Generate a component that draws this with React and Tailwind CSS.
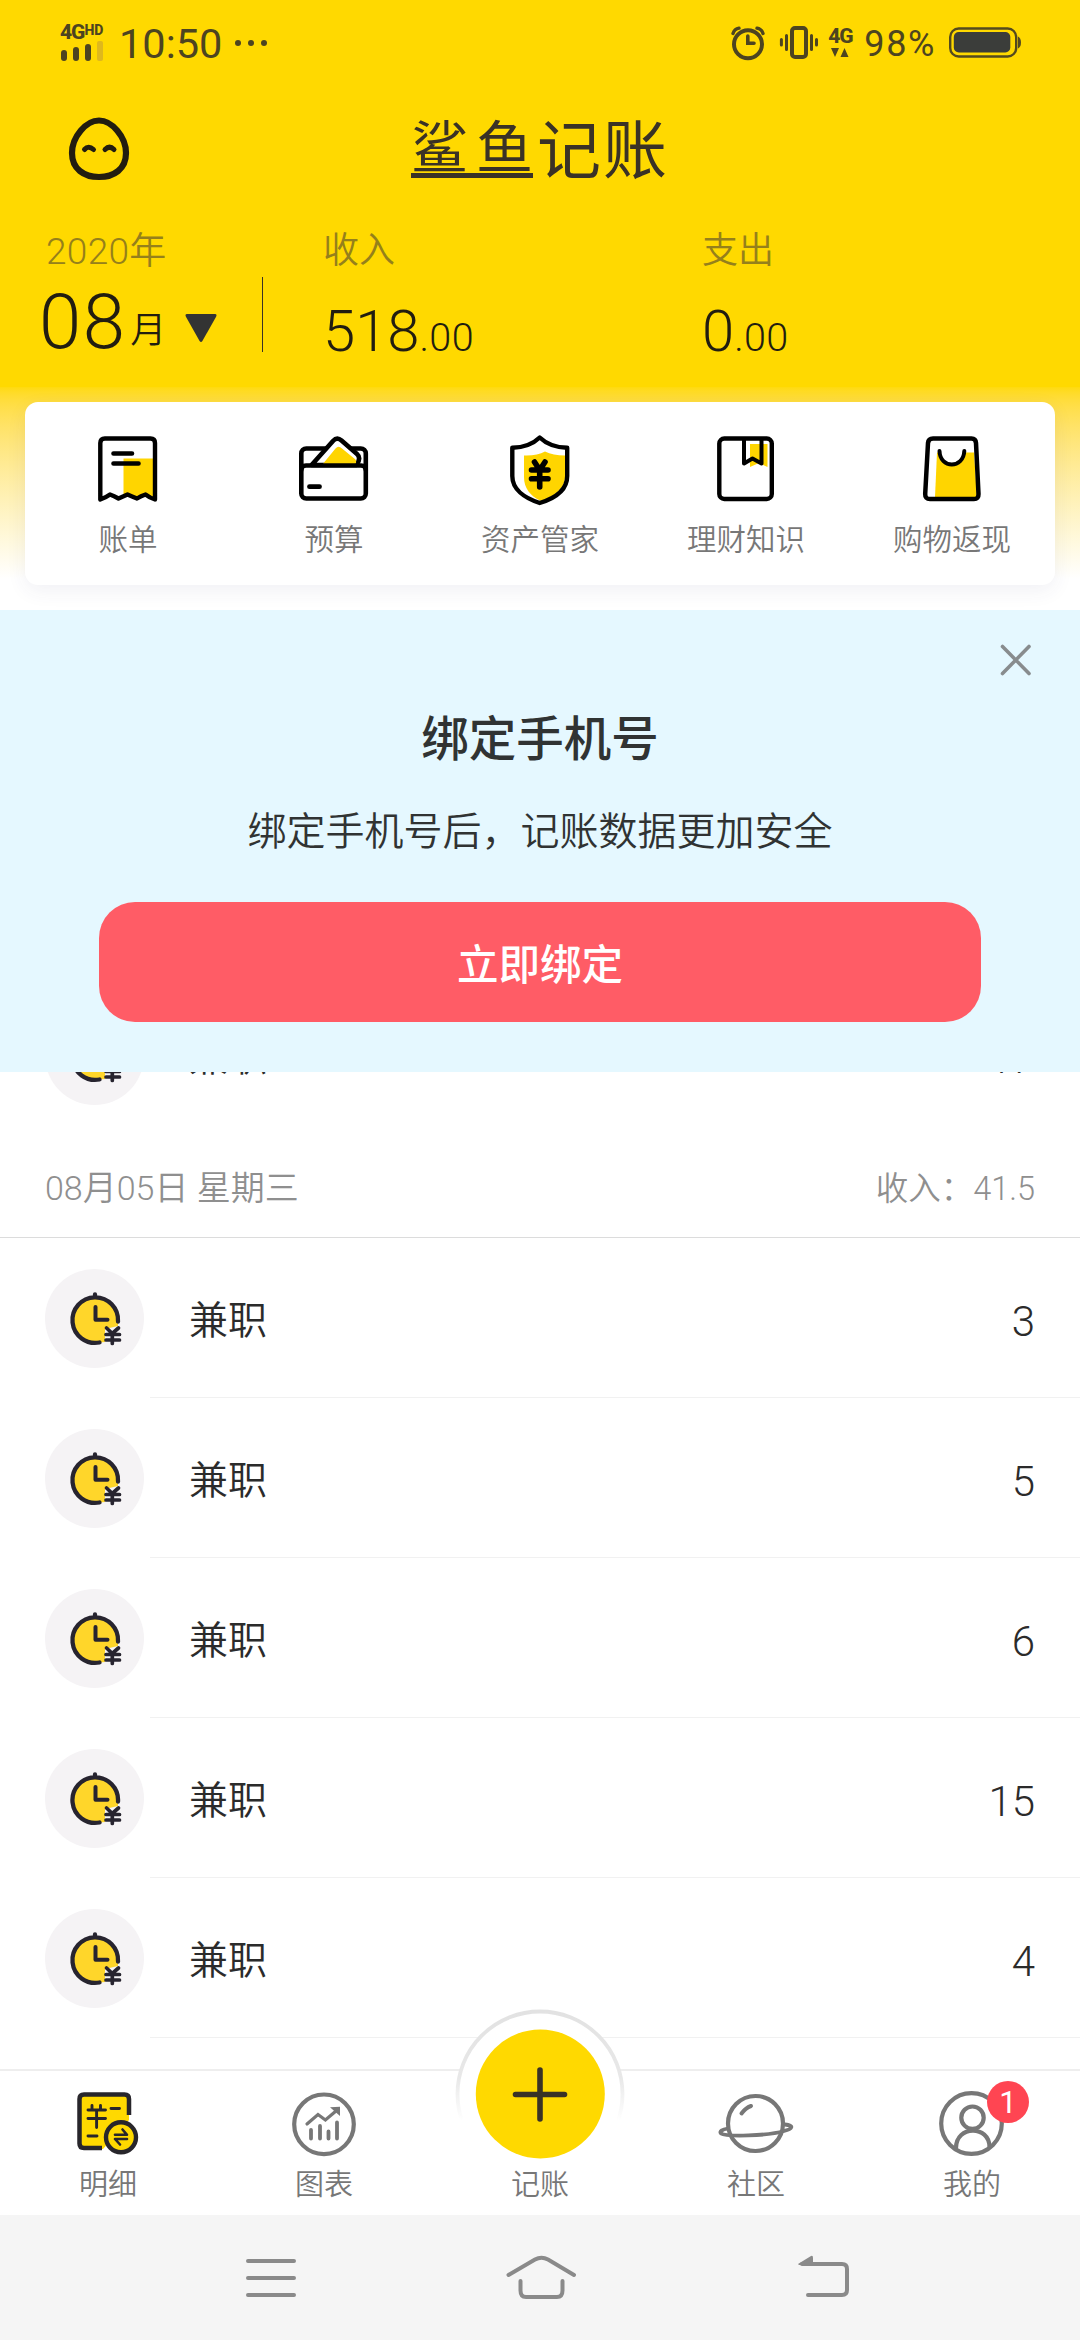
import React from "react";

const latin = "font-[Roboto,'Noto_Sans_CJK_SC',sans-serif]";

function EggIcon() {
  return (
    <svg width="62" height="64" viewBox="0 0 62 64" fill="none" stroke="#221d10" strokeLinecap="round">
      <path d="M31 3.5C44 3.5 58 20 58 36C58 52 46 60 31 60C16 60 4 52 4 36C4 20 18 3.5 31 3.5Z" strokeWidth="6.2" />
      <path d="M16.5 32.5Q20.5 28 25.5 32.5M37 32.5Q41.5 28 46 32.5" strokeWidth="5" />
    </svg>
  );
}

function SignalIcon() {
  return (
    <svg width="44" height="21" viewBox="0 0 44 21" fill="#4d4420">
      <rect x="1" y="10" width="6" height="11" rx="3" />
      <rect x="13" y="7" width="6" height="14" rx="3" />
      <rect x="25" y="4" width="6" height="17" rx="3" />
      <rect x="37" y="1" width="6" height="20" rx="2" fill="#dfb81c" />
    </svg>
  );
}

function AlarmIcon() {
  return (
    <svg width="34" height="35" viewBox="0 0 34 35" fill="none" stroke="#4d4420" strokeLinecap="round">
      <circle cx="17" cy="18.3" r="14" strokeWidth="4" />
      <path d="M16.8 10V17.3H23" strokeWidth="3.6" />
      <path d="M2 7.5Q3.5 3 8 2.2M32 7.5Q30.5 3 26 2.2" strokeWidth="3.4" />
    </svg>
  );
}

function VibrateIcon() {
  return (
    <svg width="40" height="36" viewBox="0 0 40 36" fill="none" stroke="#4d4420" strokeLinecap="round">
      <rect x="13" y="3" width="14" height="29" rx="3" strokeWidth="4" />
      <path d="M2.4 14.5V20M7.5 10.5V24.5M32.5 10.5V24.5M37.5 14.5V20" strokeWidth="3" />
    </svg>
  );
}

function BatteryIcon() {
  return (
    <svg width="72" height="32" viewBox="0 0 72 32" fill="none">
      <rect x="1.2" y="1.5" width="66" height="28" rx="8.5" stroke="#544a1e" strokeWidth="2.4" />
      <rect x="4.8" y="5" width="56.5" height="20.5" rx="5" fill="#3b3d3a" />
      <path d="M69 9.5Q72 11 72 15.5Q72 20 69 21.5Z" fill="#544a1e" />
    </svg>
  );
}

function BillIcon() {
  return (
    <svg width="60" height="68" viewBox="0 0 60 68" fill="none" stroke="#000" strokeLinecap="round" strokeLinejoin="round">
      <path d="M25.5 22.5H55V61L47 58L39 62L29.5 58L25.5 60Z" fill="#ffd500" stroke="none" />
      <path d="M2.3 63.5V7Q2.3 2.5 6.8 2.5H52.5Q57 2.5 57 7V63.5Q52 62 47.5 58.5Q43 60 39 62.5Q34 60.5 29.5 58.5Q25 60.5 20.5 62.5Q16 60 12 58.5Q8 61.5 2.3 63.5Z" strokeWidth="4.4" />
      <path d="M15.5 17.5H34M15.5 27.5H40.5" strokeWidth="4.6" />
    </svg>
  );
}

function WalletIcon() {
  return (
    <svg width="70" height="68" viewBox="0 0 70 68" fill="none" stroke="#000" strokeLinecap="round" strokeLinejoin="round">
      <rect x="2.3" y="12.5" width="64.5" height="50" rx="5" strokeWidth="4.6" />
      <path d="M12.6 29L34 5Q38 .5 42.5 4.5L58 18Q62.5 22 57.5 29Z" fill="#fff" strokeWidth="4.6" />
      <path d="M23 29L36.5 12.5Q39.5 9 43 12.5L56.5 23.5Q58 26 56 29Z" fill="#ffd500" stroke="none" />
      <path d="M2.3 34Q2.3 29.5 7 29.5H62Q66.8 29.5 66.8 34" strokeWidth="4.6" />
      <path d="M10.5 50.7H20.5" strokeWidth="4.8" />
    </svg>
  );
}

function ShieldIcon() {
  return (
    <svg width="60" height="72" viewBox="0 0 60 72" fill="none" stroke="#000" strokeLinecap="round" strokeLinejoin="round">
      <path d="M14 21.5Q27 22 35 17.5Q43 21.5 55 21.5V43C55 54 44 63 31 67C20 62 14 54 14 43Z" fill="#ffd500" stroke="none" />
      <path d="M29.7 3.5C23 10 14 13.5 2.3 13.7V42C2.3 55 14 64 29.7 69C46 64 57.2 55 57.2 42V13.7C46 13.5 36.5 10 29.7 3.5Z" strokeWidth="4.4" />
      <path d="M24.5 28L29.7 36L35 28M21.5 36H38M21.5 44.7H38M29.7 36V53" strokeWidth="5.6" />
    </svg>
  );
}

function BookIcon() {
  return (
    <svg width="58" height="68" viewBox="0 0 58 68" fill="none" stroke="#000" strokeLinecap="round" strokeLinejoin="round">
      <path d="M33 8H50.5V31L42 27L33 31Z" fill="#ffd500" stroke="none" />
      <rect x="2.3" y="2.5" width="52.5" height="60.5" rx="5" strokeWidth="4.4" />
      <path d="M27 3V27.5L35.5 22.5L44.5 27.5V3" strokeWidth="4" />
    </svg>
  );
}

function BagIcon() {
  return (
    <svg width="60" height="68" viewBox="0 0 60 68" fill="none" stroke="#000" strokeLinecap="round" strokeLinejoin="round">
      <path d="M15 16.5H52L55 61H13Z" fill="#ffd500" stroke="none" />
      <path d="M11 2.5H49.5Q53.7 2.5 54 7L56.5 58Q56.7 63 52 63H8Q3 63 3.2 58L6 7Q6.4 2.5 11 2.5Z" strokeWidth="4.5" />
      <path d="M17.5 15C18 33 41.5 33 42.3 15" fill="#fff" strokeWidth="4" />
    </svg>
  );
}

function JobIcon() {
  return (
    <svg className="block h-[99px] w-[99px] shrink-0" viewBox="0 0 99 99" fill="none" stroke="#27242f" strokeLinecap="round">
      <circle cx="49.5" cy="49.5" r="49.5" fill="#f5f3f5" stroke="none" />
      <path d="M50 28A23 23 0 0 1 73 52L73 57L60 60V73L50 74A23 23 0 0 1 50 28Z" fill="#ffd62a" stroke="none" />
      <path d="M54.5 73.5A22.8 22.8 0 1 1 73 52.5M50 28V25.5" strokeWidth="4.3" />
      <path d="M50.5 38V50.7H62.5" strokeWidth="4" strokeLinejoin="round" />
      <path d="M61.5 59L67.3 64.5L73.5 59M61 65.5H74.5M61 71H74.5M67.3 65V74.5" strokeWidth="3.7" />
    </svg>
  );
}

function DetailIcon() {
  return (
    <svg width="62" height="64" viewBox="0 0 62 64" fill="none" stroke="#28262b" strokeLinecap="round">
      <path d="M6 2.5H48Q52 2.5 52 6.5V28L26 57H6Q2.5 57 2.5 53V6.5Q2.5 2.5 6 2.5Z" fill="#ffd900" stroke="none" />
      <path d="M52 23V7Q52 2.5 47.5 2.5H7Q2.5 2.5 2.5 7V51.5Q2.5 56 7 56H25" strokeWidth="4.5" strokeLinecap="butt" />
      <path d="M11 18H28.5M11 26.5H28.5M19.6 18V35.5M15 13.5V18M23.5 13.5V18M34 16.5H42.5M11 44H20" strokeWidth="2.9" />
      <circle cx="44" cy="45.3" r="15" fill="#ffd900" strokeWidth="4.4" />
      <path d="M38 42.8H50L45.5 37.5M50 47H38L43 52.5" strokeWidth="2.6" strokeLinejoin="round" />
    </svg>
  );
}

function ChartIcon() {
  return (
    <svg width="64" height="65" viewBox="0 0 64 65" fill="none" stroke="#777" strokeLinecap="round">
      <circle cx="32" cy="32.3" r="29.8" strokeWidth="4.2" />
      <path d="M15 32L26 22.5L33.4 28L44 19" strokeWidth="3.2" />
      <path d="M38 15.3L48 14.7V24Z" fill="#777" stroke="none" />
      <path d="M19 38V46.5M28 34V46.5M36.5 39.5V46.5M45 30.5V46.5" strokeWidth="3.8" />
    </svg>
  );
}

function PlanetIcon() {
  return (
    <svg width="76" height="62" viewBox="0 0 76 62" fill="none" stroke="#777" strokeLinecap="round">
      <circle cx="37.5" cy="30.5" r="27.5" strokeWidth="4.2" />
      <path d="M10 35.5C4 36.5 1 38.5 3 40.5C8 44 50 43 66 38C74 36 77 32.5 67 31.5" strokeWidth="3.8" />
      <path d="M23.5 20.5Q27.5 15 33 13" strokeWidth="4" />
    </svg>
  );
}

function UserIcon() {
  return (
    <svg width="66" height="66" viewBox="0 0 66 66" fill="none" stroke="#777" strokeLinecap="round">
      <circle cx="32.5" cy="32.5" r="30.3" strokeWidth="4.2" />
      <circle cx="33.5" cy="26.7" r="11.2" strokeWidth="4.2" />
      <path d="M17 57C17 34 50.5 34 50.5 56" strokeWidth="4.2" />
    </svg>
  );
}

const shortcuts = [
  { label: "账单", Icon: BillIcon },
  { label: "预算", Icon: WalletIcon },
  { label: "资产管家", Icon: ShieldIcon },
  { label: "理财知识", Icon: BookIcon },
  { label: "购物返现", Icon: BagIcon },
];

function StatusBar() {
  return (
    <div className="flex h-[86px] items-center pl-[60px] pr-[59px] text-[#4d4420]">
      <div className="flex h-[36px] w-[46px] flex-col justify-between">
        <div className="flex items-start leading-none">
          <span className="text-[21px] leading-[15px] font-extrabold tracking-[-1px]">4G</span>
          <span className="text-[14px] leading-[10px] font-extrabold">HD</span>
        </div>
        <SignalIcon />
      </div>
      <span className="ml-[13px] mt-[2px] text-[41.5px] leading-none">10:50</span>
      <div className="ml-[13px] flex gap-[7px]">
        <i className="size-[6px] rounded-full bg-[#4d4420]" />
        <i className="size-[6px] rounded-full bg-[#4d4420]" />
        <i className="size-[6px] rounded-full bg-[#4d4420]" />
      </div>
      <div className="ml-auto flex items-center">
        <AlarmIcon />
        <div className="ml-[14px]"><VibrateIcon /></div>
        <div className="ml-[8px] flex w-[26px] flex-col items-center gap-[4px]">
          <span className="text-[21px] leading-[16px] font-extrabold tracking-[-1px]">4G</span>
          <svg width="20" height="10" viewBox="0 0 20 10" fill="#4d4420"><path d="M1 0H9L5 9ZM10.5 9H18.5L14.5 0Z" /></svg>
        </div>
        <span className="ml-[11px] mr-[13px] mt-[2px] text-[36px] leading-none tracking-[1.6px]">98%</span>
        <BatteryIcon />
      </div>
    </div>
  );
}

function TitleBar() {
  return (
    <div className="grid h-[130px] grid-cols-[1fr_auto_1fr] items-start">
      <div className="pl-[68px] pt-[31px]"><EggIcon /></div>
      <h1 className="mt-[32px] flex h-[60px] w-[258px] items-start text-[#3a3226] font-['Noto_Sans_CJK_SC',sans-serif]">
        <span className="flex h-[60px] w-[126px] justify-between border-b-[5px] border-[#3a3226] text-[57px] leading-[50px]">
          <span>鲨</span>
          <span>鱼</span>
        </span>
        <span className="ml-[4px] text-[64px] leading-[55px] tracking-[2px] whitespace-nowrap">记账</span>
      </h1>
      <div />
    </div>
  );
}

function Amount({ label, whole, fraction }) {
  return (
    <div>
      <div className="h-[36px] text-[36px] leading-[38px] text-[#95801b]">{label}</div>
      <div className="mt-[33px] flex h-[60px] items-baseline leading-[60px] text-[#221d10]">
        <span className="text-[58px]">{whole}</span>
        <span className="text-[39.5px] tracking-[0.4px]">{fraction}</span>
      </div>
    </div>
  );
}

function Summary() {
  return (
    <div className="flex h-[171px] items-start pt-[16px] font-[350]">
      <div className="w-[262px] pl-[46px]">
        <div className="h-[36px] text-[37px] leading-[39px] tracking-[0.3px] text-[#95801b]">2020年</div>
        <div className="ml-[-7px] mt-[14px] flex h-[80px] items-baseline leading-[80px] text-[#221d10]">
          <span className="text-[76px] tracking-[1.5px]">08</span>
          <span className="ml-[4px] self-end text-[36px] leading-[62px]">月</span>
          <svg className="ml-[19px]" width="32" height="34" viewBox="0 0 31 33"><path d="M2 0H29Q31.5 0 30 3L17 26Q15.5 28.5 14 26L1 3Q-.5 0 2 0Z" fill="#333" /></svg>
        </div>
      </div>
      <div className="mt-[45px] h-[75px] w-px bg-[#3a3226]" />
      <div className="ml-[60px] w-[379px]"><Amount label="收入" whole="518" fraction=".00" /></div>
      <Amount label="支出" whole="0" fraction=".00" />
    </div>
  );
}

function Shortcuts() {
  return (
    <div className="h-[223px] bg-linear-to-b from-[#ffda0c] to-white to-[192px] px-[25px] pt-[15px]">
      <div className="grid h-[183px] grid-cols-5 rounded-[13px] bg-white shadow-[0_6px_20px_rgba(60,60,110,0.07)]">
        {shortcuts.map(({ label, Icon }) => (
          <div key={label} className="flex flex-col items-center">
            <div className="flex h-[120px] items-center pt-[16px]"><Icon /></div>
            <span className="text-[29.5px] leading-[37px] font-[350] text-[#777]">{label}</span>
          </div>
        ))}
      </div>
    </div>
  );
}

function BindBanner() {
  return (
    <section className="relative z-10 flex h-[462px] shrink-0 flex-col items-center bg-[#e5f8ff] text-[#303333]">
      <svg className="mr-[48px] mt-[34px] self-end" width="32" height="32" viewBox="0 0 32 32" stroke="#888c8e" strokeWidth="3.6" strokeLinecap="round">
        <path d="M2.5 2.5L29 29.5M29 2.5L2.5 29.5" />
      </svg>
      <h2 className="mt-[34px] text-[47.5px] leading-[60px] font-medium">绑定手机号</h2>
      <p className="mt-[37px] text-[39px] leading-[50px] font-[350]">绑定手机号后，记账数据更加安全</p>
      <button className="mt-[45px] h-[120px] w-[882px] rounded-[36px] bg-[#ff5c66] pt-[7px] text-[41.5px] leading-[50px] font-medium text-white">立即绑定</button>
    </section>
  );
}

function Entry({ amount }) {
  return (
    <div className="flex h-[160px] shrink-0 items-center pl-[45px]">
      <JobIcon />
      <div className="ml-[6px] flex h-full flex-1 items-center justify-between border-b border-[#f1f1f1] pl-[39px] pr-[45px] text-[#2b2b2b]">
        <span className="mt-[6px] text-[39px] leading-[50px] font-[350]">兼职</span>
        <span className="mt-[9px] text-[42px] leading-[50px] font-light">{amount}</span>
      </div>
    </div>
  );
}

function EntryList() {
  return (
    <main className="mt-[-97px] flex h-[1094px] shrink-0 flex-col overflow-hidden bg-white">
      <Entry amount="17" />
      <div className="mt-[-1px] flex h-[104px] shrink-0 items-center justify-between border-b border-[#dcdcdc] bg-white px-[45px] pt-[5px] font-[350] text-[#8f8f8f]">
        <span className="text-[34px]">08月05日 星期三</span>
        <span className="mt-[3px] text-[32.5px]">收入：41.5</span>
      </div>
      {["3", "5", "6", "15", "4"].map((a) => <Entry key={a} amount={a} />)}
    </main>
  );
}

function Tab({ label, children }) {
  return (
    <div className="relative flex flex-col items-center">
      <div className="flex h-[93px] items-center pt-[13px]">{children}</div>
      <span className="relative z-10 mt-[3px] text-[29px] leading-[36px] font-[350] text-[#777]">{label}</span>
    </div>
  );
}

function TabBar() {
  return (
    <nav className="relative z-20 grid h-[146px] shrink-0 grid-cols-5 border-t-2 border-[#eee] bg-white">
      <Tab label="明细"><DetailIcon /></Tab>
      <Tab label="图表"><ChartIcon /></Tab>
      <Tab label="记账">
        <svg className="absolute left-[22px] top-[-63px]" width="172" height="172" viewBox="0 0 172 172" fill="none">
          <defs>
            <linearGradient id="ring" x1="0" y1="0" x2="0" y2="1">
              <stop offset="0" stopColor="#e2e2e2" />
              <stop offset=".4" stopColor="#e8e8e8" />
              <stop offset=".66" stopColor="#fff" />
            </linearGradient>
          </defs>
          <circle cx="86" cy="86" r="82.5" fill="#fff" stroke="url(#ring)" strokeWidth="3.8" />
          <circle cx="86.3" cy="86" r="64.5" fill="#ffd900" />
          <path d="M61.5 86.5H110.5M86 62V111" stroke="#3a3226" strokeWidth="5.6" strokeLinecap="round" />
        </svg>
      </Tab>
      <Tab label="社区"><PlanetIcon /></Tab>
      <Tab label="我的">
        <UserIcon />
        <span className="absolute left-[123px] top-[10px] grid size-[42px] place-items-center rounded-full bg-[#ff4552] text-[31px] leading-none text-white">1</span>
      </Tab>
    </nav>
  );
}

function SystemNav() {
  return (
    <footer className="flex h-[126px] shrink-0 items-start bg-[#f5f5f5] pl-[246px] pt-[40px]">
      <svg width="50" height="46" viewBox="0 0 50 46" stroke="#8a8a8a" strokeWidth="4" strokeLinecap="round">
        <path d="M2 6H48M2 23H48M2 40H48" />
      </svg>
      <svg className="ml-[210px]" width="71" height="46" viewBox="0 0 71 46" fill="none" stroke="#8a8a8a" strokeWidth="4" strokeLinecap="round">
        <path d="M2.5 20L29 4.5Q35.5 .8 42 4.5L68 20M14.5 26V35.5Q14.5 42 20 42H51Q56.5 42 56.5 35.5V26" />
      </svg>
      <svg className="ml-[221px]" width="52" height="46" viewBox="0 0 52 46" fill="none" stroke="#8a8a8a" strokeWidth="4" strokeLinecap="round">
        <path d="M4 9H44Q49 9 49 14V35Q49 40 44 40H10" />
        <path d="M0 9L13 1Q15 0 15 3V10H1Z" fill="#8a8a8a" stroke="none" />
      </svg>
    </footer>
  );
}

export default function App() {
  return (
    <div className={`${latin} flex h-[2340px] w-[1080px] flex-col overflow-hidden bg-white`}>
      <header className="relative z-10 shrink-0 bg-[#ffd900]">
        <StatusBar />
        <TitleBar />
        <Summary />
        <Shortcuts />
      </header>
      <BindBanner />
      <EntryList />
      <TabBar />
      <SystemNav />
    </div>
  );
}
